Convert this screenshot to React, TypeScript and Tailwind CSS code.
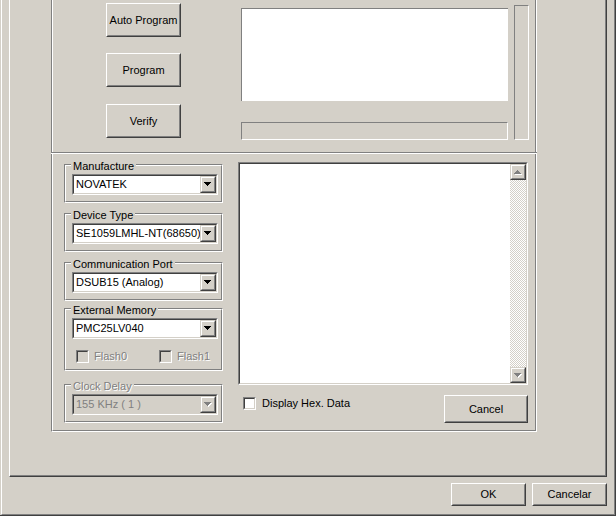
import React from "react";

// win2k style bevels
const raisedOuter = "border border-t-white border-l-white border-r-[#404040] border-b-[#404040]";
const raisedInner = "border border-t-[#d4d0c8] border-l-[#d4d0c8] border-r-[#808080] border-b-[#808080]";
const sunkOuter = "border border-t-[#808080] border-l-[#808080] border-r-white border-b-white";
const sunkInner = "border border-t-[#404040] border-l-[#404040] border-r-[#d4d0c8] border-b-[#d4d0c8]";
const disabledText = "text-[#808080] [text-shadow:1px_1px_0_#fff]";

function Button({ label, className }: { label: string; className: string }) {
  return (
    <div className={`${raisedOuter} ${className}`}>
      <div className={`${raisedInner} h-full flex items-center justify-center text-black`}>{label}</div>
    </div>
  );
}

function Arrow({ up, disabled }: { up?: boolean; disabled?: boolean }) {
  const d = up
    ? "M3 0h1v1H3zM2 1h3v1H2zM1 2h5v1H1zM0 3h7v1H0z"
    : "M0 0h7v1H0zM1 1h5v1H1zM2 2h3v1H2zM3 3h1v1H3z";
  return (
    <svg width="8" height="5" viewBox="0 0 8 5" shapeRendering="crispEdges">
      {disabled && <path d={d} fill="#fff" transform="translate(1 1)" />}
      <path d={d} fill={disabled ? "#808080" : "#000"} />
    </svg>
  );
}

function ArrowButton({ up, disabled, className }: { up?: boolean; disabled?: boolean; className: string }) {
  return (
    <div className={`border border-t-[#d4d0c8] border-l-[#d4d0c8] border-r-[#404040] border-b-[#404040] bg-[#d4d0c8] ${className}`}>
      <div className="h-full flex items-center justify-center border border-t-white border-l-white border-r-[#808080] border-b-[#808080]">
        <Arrow up={up} disabled={disabled} />
      </div>
    </div>
  );
}

function Combo({ value, disabled }: { value: string; disabled?: boolean }) {
  return (
    <div className={`${sunkOuter} h-[21px] w-[146px]`}>
      <div
        className={`${sunkInner} h-full flex items-center ${
          disabled ? "bg-[#d4d0c8] text-[#808080]" : "bg-white text-black"
        }`}
      >
        <span className="flex-1 pl-[2px] whitespace-nowrap overflow-hidden">{value}</span>
        <ArrowButton disabled={disabled} className="w-[16px] h-full" />
      </div>
    </div>
  );
}

function Check({ disabled }: { disabled?: boolean }) {
  return (
    <div className={`${sunkOuter} w-[13px] h-[13px] shrink-0`}>
      <div className={`${sunkInner} h-full ${disabled ? "bg-[#d4d0c8]" : "bg-white"}`} />
    </div>
  );
}

function Group({
  label,
  disabled,
  className,
  children,
}: {
  label: string;
  disabled?: boolean;
  className: string;
  children: React.ReactNode;
}) {
  return (
    <div className={`relative ${sunkOuter} ${className}`}>
      <div className="h-full border border-t-white border-l-white border-r-[#808080] border-b-[#808080] pl-[6px] pt-[8px]">
        {children}
      </div>
      <span
        className={`absolute left-[6px] -top-[5px] px-[2px] bg-[#d4d0c8] leading-[13px] whitespace-nowrap ${
          disabled ? disabledText : "text-black"
        }`}
      >
        {label}
      </span>
    </div>
  );
}

export default function App() {
  return (
    <div className="w-[616px] h-[516px] overflow-hidden bg-[#d4d0c8] pl-[1px] border-r border-b border-[#404040] font-['Liberation_Sans',Arial,sans-serif] text-[11px] text-black">
      <div className="h-full flex flex-col border-l border-r border-b border-l-white border-r-[#808080] border-b-[#808080]">
        {/* property page */}
        <div className="mx-[7px] h-[477px] border-l border-r border-b border-l-white border-r-[#404040] border-b-[#404040]">
          <div className="h-full border-r border-b border-[#808080]">
            <div className="ml-[41px] w-[486px] h-[432px] border-l border-r border-b border-l-[#808080] border-r-white border-b-white">
              <div className="h-full flex flex-col border-l border-r border-b border-l-white border-r-[#808080] border-b-[#808080]">
                {/* upper half */}
                <div className="h-[152px] flex">
                  <div className="ml-[53px] w-[75px] pt-[3px] flex flex-col">
                    <Button label="Auto Program" className="h-[34px]" />
                    <Button label="Program" className="h-[34px] mt-[16px]" />
                    <Button label="Verify" className="h-[34px] mt-[17px]" />
                  </div>
                  <div className="ml-[60px] w-[267px] pt-[8px] flex flex-col">
                    <div className="h-[93px] bg-white border-t border-l border-[#808080]" />
                    <div className="h-[18px] mt-[21px] border-t border-l border-t-[#808080] border-l-[#808080] border-b border-r border-b-white border-r-white" />
                  </div>
                  <div className="ml-[6px] w-[15px] mt-[5px] h-[135px] border-t border-l border-t-[#808080] border-l-[#808080] border-b border-r border-b-white border-r-white" />
                </div>
                <div className="-mx-[2px] h-[2px] border-t border-t-[#808080] border-b border-b-white" />
                {/* lower half */}
                <div className="flex-1 flex">
                  <div className="ml-[11px] w-[159px] flex flex-col">
                    <Group label="Manufacture" className="h-[39px] mt-[10px]">
                      <Combo value="NOVATEK" />
                    </Group>
                    <Group label="Device Type" className="h-[39px] mt-[10px]">
                      <Combo value="SE1059LMHL-NT(68650)" />
                    </Group>
                    <Group label="Communication Port" className="h-[39px] mt-[10px]">
                      <Combo value="DSUB15 (Analog)" />
                    </Group>
                    <Group label="External Memory" className="h-[63px] mt-[7px]">
                      <Combo value="PMC25LV040" />
                      <div className="flex mt-[11px] ml-[4px]">
                        <div className="w-[83px] flex items-center gap-[5px]">
                          <Check disabled />
                          <span className={`leading-[13px] ${disabledText}`}>Flash0</span>
                        </div>
                        <div className="flex items-center gap-[5px]">
                          <Check disabled />
                          <span className={`leading-[13px] ${disabledText}`}>Flash1</span>
                        </div>
                      </div>
                    </Group>
                    <Group label="Clock Delay" disabled className="h-[39px] mt-[13px]">
                      <Combo value="155 KHz ( 1 )" disabled />
                    </Group>
                  </div>
                  <div className="ml-[15px] w-[290px] pt-[8px] flex flex-col">
                    <div className={`${sunkOuter} h-[223px]`}>
                      <div className={`${sunkInner} h-full flex bg-white`}>
                        <div className="flex-1" />
                        <div className="w-[16px] flex flex-col">
                          <ArrowButton up disabled className="h-[16px]" />
                          <div className="flex-1 [background-image:repeating-conic-gradient(#fff_0_25%,#d4d0c8_0_50%)] [background-size:2px_2px]" />
                          <ArrowButton disabled className="h-[16px]" />
                        </div>
                      </div>
                    </div>
                    <div className="mt-[10px] flex justify-between">
                      <div className="mt-[2px] pl-[5px] flex items-center gap-[6px] h-[13px]">
                        <Check />
                        <span className="leading-[13px]">Display Hex. Data</span>
                      </div>
                      <Button label="Cancel" className="w-[84px] h-[28px]" />
                    </div>
                  </div>
                </div>
              </div>
            </div>
          </div>
        </div>
        {/* dialog buttons */}
        <div className="mt-[6px] pr-[7px] flex justify-end gap-[6px]">
          <Button label="OK" className="w-[75px] h-[23px]" />
          <Button label="Cancelar" className="w-[75px] h-[23px]" />
        </div>
      </div>
    </div>
  );
}
